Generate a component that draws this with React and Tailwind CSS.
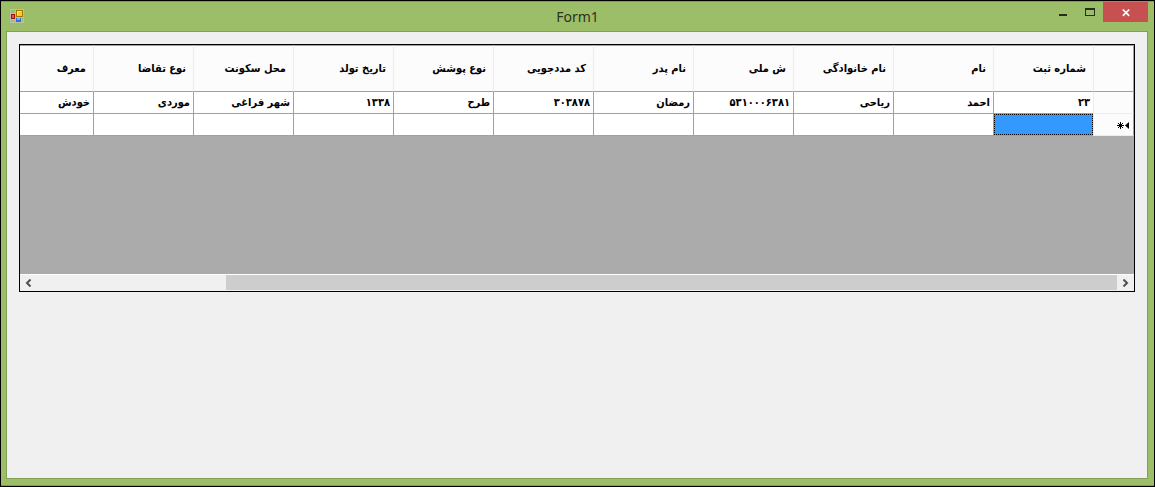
const columns = [
  { title: "شماره ثبت", value: "۲۳" },
  { title: "نام", value: "احمد" },
  { title: "نام خانوادگی", value: "ریاحی" },
  { title: "ش ملی", value: "۵۳۱۰۰۰۶۳۸۱" },
  { title: "نام پدر", value: "رمضان" },
  { title: "کد مددجویی", value: "۳۰۳۸۷۸" },
  { title: "نوع پوشش", value: "طرح" },
  { title: "تاریخ تولد", value: "۱۳۳۸" },
  { title: "محل سکونت", value: "شهر فراغی" },
  { title: "نوع تقاضا", value: "موردی" },
  { title: "معرف", value: "خودش" },
];

function FormIcon() {
  return (
    <svg width="14" height="14" viewBox="0 0 14 14" shapeRendering="crispEdges" aria-hidden="true">
      <rect width="14" height="14" fill="#b9bfb0" />
      <path d="M1 1h4v3H1zM1 11h2v2H1zM4 11h1v2H4zM12 9h1v4h-1z" fill="#9dbe68" />
      <rect x="6" y="1" width="7" height="7" fill="#a87500" />
      <rect x="7" y="2" width="5" height="5" fill="#ffc928" />
      <path d="M7 2h4v1H8v3H7z" fill="#ffe680" />
      <rect x="1" y="5" width="4" height="5" fill="#a51210" />
      <rect x="2" y="6" width="2" height="3" fill="#e0584a" />
      <rect x="6" y="9" width="5" height="4" fill="#2f6fd0" />
      <rect x="7" y="9" width="3" height="2" fill="#7cb0f5" />
    </svg>
  );
}

function TitleBar() {
  return (
    <header className="grid h-[30px] grid-cols-[1fr_auto_1fr] items-start border-t border-[#7f9e50]">
      <div className="pt-[7px] pl-[9px]">
        <FormIcon />
      </div>
      <h1 className="pt-[5px] font-['Noto_Sans',sans-serif] text-[14px] leading-5 text-[#2b331f]">Form1</h1>
      <div className="flex justify-end pr-[6px]">
        <button type="button" aria-label="Minimize" className="flex h-5 w-7 justify-center">
          <svg width="8" height="20" shapeRendering="crispEdges"><path d="M0 12h8v2H0z" fill="#272f1b" /></svg>
        </button>
        <button type="button" aria-label="Maximize" className="flex h-5 w-[26px] justify-center">
          <svg width="10" height="20" shapeRendering="crispEdges">
            <path fillRule="evenodd" d="M0 6h10v8H0zM1 8v5h8V8z" fill="#272f1b" />
          </svg>
        </button>
        <button type="button" aria-label="Close" className="flex h-5 w-[45px] justify-center bg-[#c75050]">
          <svg width="8" height="20"><path d="M0.8 7.500l6.400 6.400M7.200 7.500l-6.400 6.400" stroke="#fff" strokeWidth="1.7" /></svg>
        </button>
      </div>
    </header>
  );
}

function RecordGrid() {
  return (
    <table dir="rtl" className="w-full table-fixed border-separate border-spacing-0 text-right text-[11px] leading-4 font-bold text-black">
      <colgroup>
        <col className="w-[41px]" />
        {columns.map((c, i) => (
          <col key={c.title} className={i === columns.length - 1 ? "w-auto" : "w-[100px]"} />
        ))}
      </colgroup>
      <thead>
        <tr className="h-[47px] bg-[#fcfcfc]">
          <td className="border-t border-r border-b border-l border-t-[#a0a0a0] border-r-[#a0a0a0] border-b-[#a0a0a0] border-l-[#e5edf7] p-0" />
          {columns.map((c, i) => (
            <th
              key={c.title}
              scope="col"
              className={`border-t border-b border-t-[#a0a0a0] border-b-[#a0a0a0] py-0 pr-[7px] pl-0 text-right font-bold whitespace-nowrap ${i < columns.length - 1 ? "border-l border-l-[#e5edf7]" : ""}`}
            >
              {c.title}
            </th>
          ))}
        </tr>
      </thead>
      <tbody>
        <tr className="h-[22px] bg-white">
          <td className="border-r border-b border-l border-r-[#a0a0a0] border-b-[#e5edf7] border-l-[#e5edf7] bg-[#fcfcfc] p-0" />
          {columns.map((c, i) => (
            <td
              key={c.title}
              className={`border-b border-[#a0a0a0] py-0 pr-[3px] pl-0 whitespace-nowrap ${i < columns.length - 1 ? "border-l" : ""}`}
            >
              {c.value}
            </td>
          ))}
        </tr>
        <tr className="h-[22px] bg-white">
          <td className="border-r border-b border-l border-r-[#a0a0a0] border-b-[#e5edf7] border-l-[#e5edf7] bg-[#fcfcfc] pt-0.5 pr-1 pb-0 pl-0">
            <svg width="12" height="7" viewBox="0 0 12 7" className="block" role="img" aria-label="New row">
              <path d="M3.500 0v7M0 3.500h7M1 1l5 5M6 1L1 6" stroke="#000" />
              <path d="M12 0v7L8 3.500z" fill="#000" />
            </svg>
          </td>
          {columns.map((c, i) => (
            <td
              key={c.title}
              className={`border-b border-[#a0a0a0] p-0 ${i < columns.length - 1 ? "border-l" : ""}`}
            >
              {i === 0 && <div className="h-[21px] border border-dotted border-black bg-[#3399ff]" />}
            </td>
          ))}
        </tr>
      </tbody>
    </table>
  );
}

function ScrollBar() {
  return (
    <div className="flex h-[17px] border-t border-white bg-[#f0f0f0]">
      <button type="button" aria-label="Scroll left" className="flex w-[17px] items-center justify-center">
        <svg width="7" height="8" viewBox="0 0 7 8"><path d="M5.500 0.500L2 4l3.500 3.500" fill="none" stroke="#505050" strokeWidth="2" /></svg>
      </button>
      <div className="flex flex-1 justify-end pb-px">
        <div className="w-[82.5%] bg-[#cdcdcd]" />
      </div>
      <button type="button" aria-label="Scroll right" className="flex w-[17px] items-center justify-center">
        <svg width="7" height="8" viewBox="0 0 7 8"><path d="M1.500 0.500L5 4L1.500 7.500" fill="none" stroke="#505050" strokeWidth="2" /></svg>
      </button>
    </div>
  );
}

export default function App() {
  return (
    <div className="flex min-h-screen flex-col border border-black bg-[#9dbe68] font-['DejaVu_Sans_Condensed','DejaVu_Sans',sans-serif]">
      <TitleBar />
      <div className="flex flex-1 flex-col border-b border-[#7f9e50] pr-[6px] pb-[6px] pl-[5px]">
        <main className="flex-1 border border-[#829f55] bg-[#f0f0f0] px-3 pt-3">
          <section className="flex h-[248px] flex-col border border-black bg-[#ababab]">
            <div className="flex-1">
              <RecordGrid />
            </div>
            <ScrollBar />
          </section>
        </main>
      </div>
    </div>
  );
}
